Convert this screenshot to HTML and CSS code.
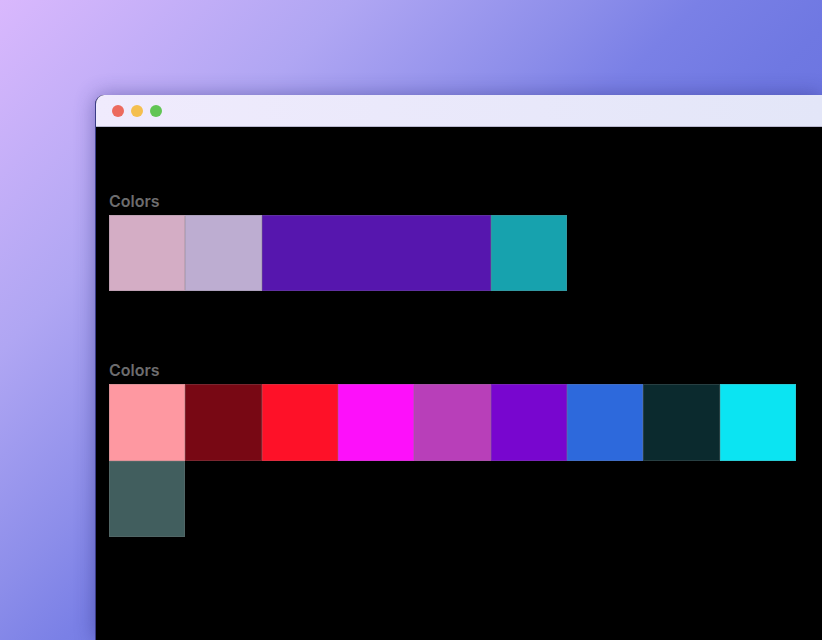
FILE: index.html
```html
<!DOCTYPE html>
<html>
<head>
<meta charset="utf-8">
<link rel="stylesheet" href="styles.css">
</head>
<body>
<div class="window">
  <div class="titlebar">
    <span class="dot red"></span>
    <span class="dot yellow"></span>
    <span class="dot green"></span>
  </div>
  <div class="content">
    <section class="palette">
      <div class="label">Colors</div>
      <div class="swatches">
        <div class="swatch" style="background:#d4adc5"></div>
        <div class="swatch" style="background:#bdadd1"></div>
        <div class="swatch wide" style="background:#5616ae"></div>
        <div class="swatch" style="background:#17a2ae"></div>
      </div>
    </section>
    <section class="palette">
      <div class="label">Colors</div>
      <div class="swatches">
        <div class="swatch" style="background:#fe98a1"></div>
        <div class="swatch" style="background:#780814"></div>
        <div class="swatch" style="background:#fe1128"></div>
        <div class="swatch" style="background:#fd10fa"></div>
        <div class="swatch" style="background:#b83fb9"></div>
        <div class="swatch" style="background:#7806cf"></div>
        <div class="swatch" style="background:#2d69dc"></div>
        <div class="swatch" style="background:#0b2a2e"></div>
        <div class="swatch" style="background:#0be4f2"></div>
        <div class="swatch" style="background:#415e5e"></div>
      </div>
    </section>
  </div>
</div>
</body>
</html>
```
FILE: styles.css
```css
html, body {
  margin: 0;
  padding: 0;
  height: 100%;
  overflow: hidden;
}
body {
  background: linear-gradient(135deg, #d9b8fd 0%, #b0a6f3 24%, #8d8eea 40%, #7a80e6 48%, #6f78e2 58%, #5a65d8 100%);
  font-family: Inter, "Noto Sans", sans-serif;
}
.window {
  margin: 95px 0 0 95px;
  width: calc(100vw - 95px);
  height: calc(100vh - 95px);
  border-top-left-radius: 9px;
  overflow: hidden;
  background: #000;
  box-shadow: 0 0 20px rgba(40, 40, 120, 0.45);
  border-left: 1px solid #3a3c86;
  box-sizing: border-box;
}
.titlebar {
  height: 32px;
  box-sizing: border-box;
  background: linear-gradient(90deg, #f0ebfd, #e3e6f8);
  border-bottom: 1px solid #b9b8cf;
  display: flex;
  align-items: center;
  gap: 7px;
  padding-left: 16px;
}
.dot {
  width: 12px;
  height: 12px;
  border-radius: 50%;
}
.red { background: #ec6a5e; }
.yellow { background: #f4bf4f; }
.green { background: #61c554; }
.content {
  padding: 64px 0 0 13px;
  display: flex;
  flex-direction: column;
  gap: 69px;
}
.palette {
  display: flex;
  flex-direction: column;
  gap: 4px;
}
.label {
  font-size: 16px;
  line-height: 20px;
  font-weight: 600;
  color: #6c6c6e;
}
.swatches {
  display: grid;
  grid-template-columns: repeat(9, 76.33px);
}
.swatch {
  aspect-ratio: 1 / 1;
  box-sizing: border-box;
  border: 1px solid rgba(128, 128, 128, 0.25);
}
.swatch.wide {
  grid-column: span 3;
  aspect-ratio: auto;
}
```
